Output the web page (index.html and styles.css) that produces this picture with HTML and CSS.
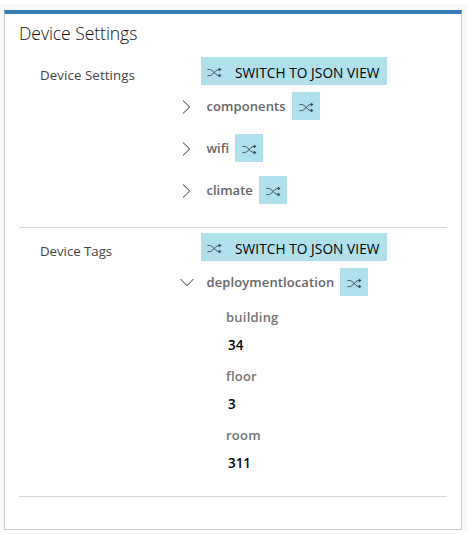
FILE: index.html
```
<!DOCTYPE html>
<html lang="en">
<head>
<meta charset="utf-8">
<title>Device Settings</title>
<link rel="stylesheet" href="styles.css">
</head>
<body>
<svg width="0" height="0" class="defs">
  <symbol id="shuffle" viewBox="0 0 15 11">
    <path d="M.5 2.4h1.8c1.5 0 2.7.9 4.9 3.1s3.4 3.1 5 3.1h1.3M.5 8.6h1.8c1.5 0 2.7-.9 4.9-3.1s3.4-3.1 5-3.1h1.3" fill="none" stroke="currentColor"/>
    <path d="M11.8.4l2.8 2-2.8 2zM11.8 6.6l2.8 2-2.8 2z" fill="currentColor"/>
  </symbol>
  <symbol id="chevron" viewBox="0 0 14 14">
    <path d="M3 .5L9.7 7 3 13.5" fill="none" stroke="currentColor"/>
  </symbol>
</svg>
<main class="card">
  <h1 class="title"><span>Device Settings</span></h1>
  <section class="section settings">
    <div class="label"><span>Device Settings</span></div>
    <div class="content">
      <button class="switch"><svg class="shuffle"><use href="#shuffle"/></svg><span>SWITCH TO JSON VIEW</span></button>
      <div class="node"><svg class="chevron"><use href="#chevron"/></svg><span class="name components">components</span><button class="toggle"><svg class="shuffle"><use href="#shuffle"/></svg></button></div>
      <div class="node"><svg class="chevron"><use href="#chevron"/></svg><span class="name wifi">wifi</span><button class="toggle"><svg class="shuffle"><use href="#shuffle"/></svg></button></div>
      <div class="node"><svg class="chevron"><use href="#chevron"/></svg><span class="name climate">climate</span><button class="toggle"><svg class="shuffle"><use href="#shuffle"/></svg></button></div>
    </div>
  </section>
  <section class="section tags">
    <div class="label tags-label"><span>Device Tags</span></div>
    <div class="content">
      <button class="switch"><svg class="shuffle"><use href="#shuffle"/></svg><span>SWITCH TO JSON VIEW</span></button>
      <div class="node"><svg class="chevron open"><use href="#chevron"/></svg><span class="name location">deploymentlocation</span><button class="toggle"><svg class="shuffle"><use href="#shuffle"/></svg></button></div>
      <dl class="fields">
        <dt>building</dt><dd>34</dd>
        <dt>floor</dt><dd>3</dd>
        <dt>room</dt><dd>311</dd>
      </dl>
    </div>
  </section>
</main>
</body>
</html>
```
FILE: styles.css
```
* { box-sizing: border-box; }
body {
  margin: 0;
  height: 534px;
  padding: 10px 5px 0 4px;
  background: linear-gradient(#fff 4px, #f9f8f7 4px, #f9f8f7 530px, #fff 530px);
  font-family: "Segoe UI", "Open Sans", "Noto Sans", sans-serif;
  overflow: hidden;
}
.defs { position: absolute; }
.card {
  width: 458px;
  height: 520px;
  padding: 0 14px;
  background: #fff;
  border: 1px solid #c8c8c8;
  border-top: 4px solid #387cb9;
}
.title {
  margin: 0;
  height: 43px;
  padding-top: 7px;
  font-size: 17.6px;
  font-weight: 300;
  line-height: 25px;
  letter-spacing: -0.08px;
  color: #111;
}
.section {
  display: grid;
  grid-template-columns: 156px 1fr;
  border-bottom: 1px solid #d6d6d6;
}
.settings { height: 171px; }
.tags { height: 269px; padding-top: 5px; }
.label {
  padding-left: 21px;
  font-size: 13.3px;
  line-height: 36px;
  letter-spacing: 0.08px;
  color: #444;
}
.tags-label { letter-spacing: -0.05px; }
button {
  display: block;
  border: 0;
  padding: 0;
  height: 28px;
  background: #b1e0ed;
  font-family: inherit;
}
.switch {
  display: flex;
  align-items: center;
  width: 186px;
  margin-left: 26px;
  padding: 3px 0 0 6px;
  gap: 13px;
  font-size: 13.7px;
  letter-spacing: 0.06px;
  white-space: nowrap;
  color: #000;
}
.shuffle { display: block; width: 15px; height: 11px; color: #3a4e55; flex: none; }
.node {
  display: flex;
  align-items: center;
  height: 28px;
  margin-top: 14px;
  padding-left: 5px;
}
.switch + .node { margin-top: 7px; }
.chevron { width: 14px; height: 14px; color: #333; margin: 2px 13px 0 0; }
.open { transform: rotate(90deg); }
.name {
  font-size: 13px;
  font-weight: 600;
  line-height: 28px;
  color: #666;
  white-space: nowrap;
  text-indent: -0.5px;
}
.components { width: 85px; letter-spacing: 0.08px; }
.wifi { width: 28px; }
.climate { width: 52px; }
.location { width: 133px; letter-spacing: 0.1px; }
.toggle { width: 28px; padding: 3px 0 0 6px; }
.toggle .shuffle { margin-left: 0.5px; }
.fields { margin: 7px 0 0 51px; font-size: 13.4px; line-height: 28px; font-weight: 600; }
dt { height: 28px; font-size: 13px; letter-spacing: 0.22px; color: #737373; }
dd { margin: 0 0 3px 2px; height: 28px; color: #000; }
```
